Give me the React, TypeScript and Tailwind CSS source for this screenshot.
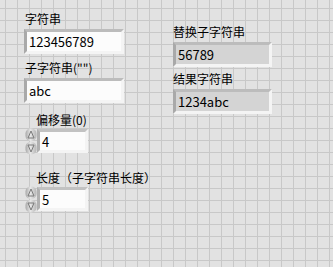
const gridBg =
  "bg-[#e2e2e2] bg-[linear-gradient(to_right,#c8c8c8_1px,transparent_1px),linear-gradient(to_bottom,#c8c8c8_1px,transparent_1px)] bg-[size:12px_12px] bg-[position:5px_8px]";

const font = "font-['Noto_Sans_CJK_SC','Noto_Sans',sans-serif]";

function Label({ children, className = "" }: { children: React.ReactNode; className?: string }) {
  return <div className={`text-[12px] leading-[14px] text-black whitespace-nowrap ${className}`}>{children}</div>;
}

function StringBox(props: { value: string; indicator?: boolean; width: number }) {
  return (
    <div
      className={`flex h-[25px] items-center border-[3px] border-t-[#bcbcbc] border-l-[#a9a9a9] border-b-[#f4f4f4] border-r-[#f4f4f4] pl-[2px] text-[13px] leading-none text-black ${
        props.indicator ? "bg-[#d4d4d4]" : "bg-[#fcfcfc]"
      }`}
      style={{ width: props.width }}
    >
      {props.value}
    </div>
  );
}

function Incrementer() {
  return (
    <svg width="12" height="27" viewBox="0 0 12 27">
      <defs>
        <linearGradient id="ib" x1="0" x2="1" y1="0" y2="0">
          <stop offset="0" stopColor="#a9a9a9" />
          <stop offset="0.45" stopColor="#e6e6e6" />
          <stop offset="1" stopColor="#b5b5b5" />
        </linearGradient>
      </defs>
      <rect x="0.5" y="0.5" width="11" height="12.5" rx="5" fill="url(#ib)" />
      <rect x="0.5" y="14" width="11" height="12.5" rx="5" fill="url(#ib)" />
      <path d="M6 3 L9 10 L3 10 Z" fill="none" stroke="#7a7a7a" strokeWidth="1" />
      <path d="M6 24 L9 17 L3 17 Z" fill="none" stroke="#7a7a7a" strokeWidth="1" />
    </svg>
  );
}

function NumericControl({ value }: { value: string }) {
  return (
    <div className="flex items-start">
      <Incrementer />
      <div className="mt-[1px] flex h-[24px] w-[51px] items-center border-[3px] border-t-[#c2c2c2] border-l-[#b0b0b0] border-b-[#f4f4f4] border-r-[#f4f4f4] bg-[#fcfcfc] pl-[2px] text-[13px] leading-none text-black">
        {value}
      </div>
    </div>
  );
}

export default function App() {
  return (
    <div className={`h-[267px] w-[333px] overflow-hidden ${gridBg} ${font}`}>
      <div className="flex pt-[12px] pl-[24px]">
        <div className="flex w-[149px] flex-col">
          <Label className="ml-[1px]">字符串</Label>
          <div className="mt-[3px]">
            <StringBox value="123456789" width={100} />
          </div>
          <Label className="ml-[1px] mt-[7px]">子字符串("")</Label>
          <div className="mt-[3px]">
            <StringBox value="abc" width={100} />
          </div>
          <Label className="ml-[12px] mt-[10px]">偏移量(0)</Label>
          <div className="ml-[1px] mt-[1px]">
            <NumericControl value="4" />
          </div>
          <Label className="ml-[12px] mt-[16px]">长度（子字符串长度）</Label>
          <div className="ml-[1px] mt-[1px]">
            <NumericControl value="5" />
          </div>
        </div>
        <div className="flex flex-col pt-[13px]">
          <Label>替换子字符串</Label>
          <div className="mt-[3px]">
            <StringBox value="56789" indicator width={99} />
          </div>
          <Label className="mt-[5px]">结果字符串</Label>
          <div className="mt-[3px]">
            <StringBox value="1234abc" indicator width={99} />
          </div>
        </div>
      </div>
    </div>
  );
}
